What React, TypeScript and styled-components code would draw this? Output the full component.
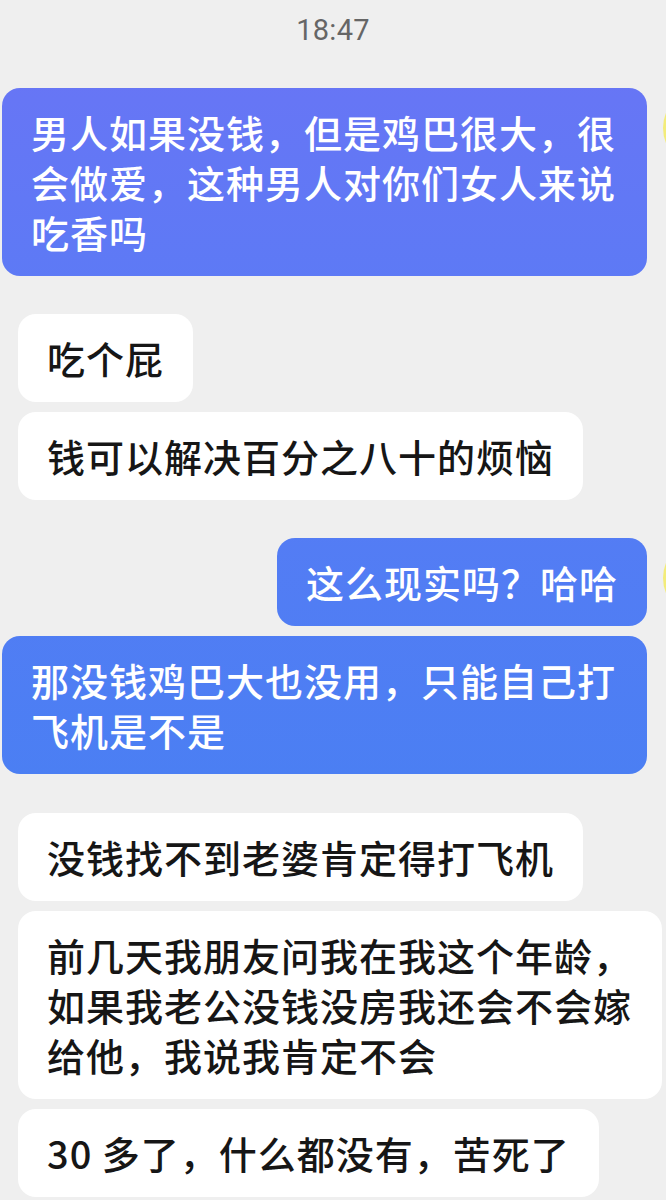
import React from "react";
import styled, { createGlobalStyle } from "styled-components";

const GlobalStyle = createGlobalStyle`
  html, body {
    margin: 0;
    padding: 0;
    background: #efefef;
  }
  body {
    width: 666px;
    overflow: hidden;
    font-family: "Noto Sans CJK SC", "Noto Sans", sans-serif;
  }
`;

const Screen = styled.div`
  width: 666px;
  min-height: 1200px;
  background: #efefef;
  overflow: hidden;
  display: flex;
  flex-direction: column;
`;

const TimeStamp = styled.div`
  padding-top: 14px;
  height: 32px;
  line-height: 32px;
  text-align: center;
  font-family: Roboto, "Noto Sans", sans-serif;
  font-size: 29px;
  font-weight: 400;
  color: #666666;
  letter-spacing: 0.3px;
`;

const Messages = styled.div`
  display: flex;
  flex-direction: column;
  margin-top: 42px;
`;

const Row = styled.div<{ $gap: number; $mine?: boolean }>`
  display: flex;
  align-items: flex-start;
  margin-top: ${(p) => p.$gap}px;
  justify-content: ${(p) => (p.$mine ? "flex-end" : "flex-start")};
  padding-left: ${(p) => (p.$mine ? 0 : 18)}px;
  margin-right: ${(p) => (p.$mine ? -77 : 0)}px;
`;

const Bubble = styled.div<{ $mine?: boolean }>`
  box-sizing: border-box;
  max-width: ${(p) => (p.$mine ? 645 : 644)}px;
  padding: 19px 29px;
  border-radius: 18px;
  font-size: 38px;
  line-height: 50px;
  letter-spacing: 1px;
  font-weight: 500;
  color: ${(p) => (p.$mine ? "#ffffff" : "#161616")};
  background: ${(p) =>
    p.$mine
      ? "linear-gradient(180deg, #6b74f5 0px, #5c7af5 300px, #4a7ff3 800px) fixed"
      : "#ffffff"};
`;

const Avatar = styled.div<{ $hidden?: boolean }>`
  flex: none;
  width: 80px;
  height: 80px;
  margin-left: 16px;
  border-radius: 50%;
  background: ${(p) => (p.$hidden ? "transparent" : "#f3ec7a")};
`;

type Msg = { text: string; mine?: boolean; gap: number; avatar?: boolean };

const messages: Msg[] = [
  {
    text: "男人如果没钱，但是鸡巴很大，很会做爱，这种男人对你们女人来说吃香吗",
    mine: true,
    gap: 0,
    avatar: true,
  },
  { text: "吃个屁", gap: 38 },
  { text: "钱可以解决百分之八十的烦恼", gap: 10 },
  { text: "这么现实吗？哈哈", mine: true, gap: 38, avatar: true },
  {
    text: "那没钱鸡巴大也没用，只能自己打飞机是不是",
    mine: true,
    gap: 10,
  },
  { text: "没钱找不到老婆肯定得打飞机", gap: 39 },
  {
    text: "前几天我朋友问我在我这个年龄，如果我老公没钱没房我还会不会嫁给他，我说我肯定不会",
    gap: 10,
  },
  { text: "30 多了，什么都没有，苦死了", gap: 10 },
];

export default function App() {
  return (
    <>
      <GlobalStyle />
      <Screen>
        <TimeStamp>18:47</TimeStamp>
        <Messages>
          {messages.map((m, i) => (
            <Row key={i} $gap={m.gap} $mine={m.mine}>
              <Bubble $mine={m.mine}>{m.text}</Bubble>
              {m.mine && <Avatar $hidden={!m.avatar} />}
            </Row>
          ))}
        </Messages>
      </Screen>
    </>
  );
}
